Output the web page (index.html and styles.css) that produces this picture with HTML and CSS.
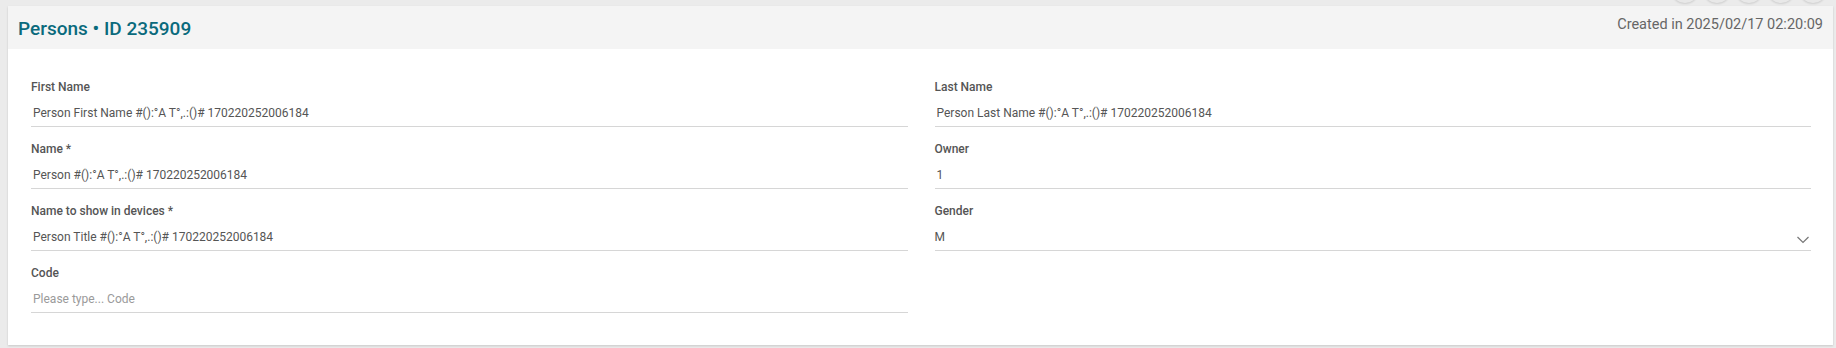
FILE: index.html
```html
<!DOCTYPE html>
<html lang="en">
<head>
    <meta charset="UTF-8">
    <title>Persons • ID 235909</title>
    <link rel="stylesheet" href="styles.css">
</head>
<body>
    <!-- round toolbar buttons, mostly scrolled out of view -->
    <div class="toolbar">
        <span class="tool"></span>
        <span class="tool"></span>
        <span class="tool"></span>
        <span class="tool"></span>
        <span class="tool"></span>
    </div>

    <div class="card">
        <div class="card-header">
            <h2 class="card-title">Persons • ID 235909</h2>
            <span class="created">Created in 2025/02/17 02:20:09</span>
        </div>

        <form class="card-body">
            <div class="column">
                <div class="field">
                    <label for="firstName">First Name</label>
                    <input type="text" id="firstName" value="Person First Name #():°A T°,.:()# 170220252006184">
                </div>
                <div class="field">
                    <label for="name">Name *</label>
                    <input type="text" id="name" value="Person #():°A T°,.:()# 170220252006184">
                </div>
                <div class="field">
                    <label for="deviceName">Name to show in devices *</label>
                    <input type="text" id="deviceName" value="Person Title #():°A T°,.:()# 170220252006184">
                </div>
                <div class="field">
                    <label for="code">Code</label>
                    <input type="text" id="code" placeholder="Please type... Code">
                </div>
            </div>

            <div class="column">
                <div class="field">
                    <label for="lastName">Last Name</label>
                    <input type="text" id="lastName" value="Person Last Name #():°A T°,.:()# 170220252006184">
                </div>
                <div class="field">
                    <label for="owner">Owner</label>
                    <input type="text" id="owner" value="1">
                </div>
                <div class="field">
                    <label for="gender">Gender</label>
                    <div class="select">
                        <span class="select-value" id="gender">M</span>
                        <svg class="chevron" width="12" height="8" viewBox="0 0 12 8">
                            <path d="M0.5 1 L6 6.5 L11.5 1" fill="none" stroke="#777" stroke-width="1.2"/>
                        </svg>
                    </div>
                </div>
            </div>
        </form>
    </div>
</body>
</html>
```

FILE: styles.css
```css
body {
    font-family: Roboto, "Liberation Sans", sans-serif;
    margin: 0;
    padding: 0 3px 4px 8px;
    background-color: #ebebeb;
    color: #555;
}
.toolbar {
    height: 6px;
    overflow: hidden;
    display: flex;
    justify-content: flex-end;
    gap: 4px;
    padding-right: 6px;
}
.tool {
    width: 28px;
    height: 28px;
    margin-top: -25px;
    border-radius: 50%;
    background-color: #e8e8e8;
    box-shadow: 0 1px 2px rgba(0, 0, 0, 0.12);
}
.card {
    background-color: #fff;
    box-shadow: 0 1px 2px rgba(0, 0, 0, 0.15);
}
.card-header {
    display: flex;
    justify-content: space-between;
    align-items: flex-start;
    height: 43px;
    padding: 0 10px;
    background-color: #f4f4f4;
}
.card-title {
    margin: 12px 0 0 0;
    font-size: 19px;
    font-weight: 500;
    line-height: 22px;
    color: #0a6a7c;
}
.created {
    margin-top: 9px;
    font-size: 14.5px;
    line-height: 20px;
    color: #666;
}
.card-body {
    display: flex;
    gap: 27px;
    padding: 29px 22px 32px 23px;
}
.column {
    flex: 1;
    display: flex;
    flex-direction: column;
}
.field {
    margin-bottom: 13px;
}
.field:last-child {
    margin-bottom: 0;
}
label {
    display: block;
    padding-top: 1px;
    font-size: 12px;
    font-weight: 500;
    line-height: 16px;
    color: #555;
    margin-bottom: 5px;
}
input[type="text"], .select {
    display: block;
    width: 100%;
    box-sizing: border-box;
    padding: 5px 2px 5px 2px;
    border: none;
    border-bottom: 1px solid #d6d6d6;
    font-family: Roboto, "Liberation Sans", sans-serif;
    font-size: 12px;
    line-height: 16px;
    color: #555;
    background: transparent;
    outline: none;
}
input::placeholder {
    color: #9a9a9a;
}
.select {
    display: flex;
    justify-content: space-between;
    align-items: center;
    padding-left: 0;
}
.chevron {
    margin-top: 5px;
}
```
